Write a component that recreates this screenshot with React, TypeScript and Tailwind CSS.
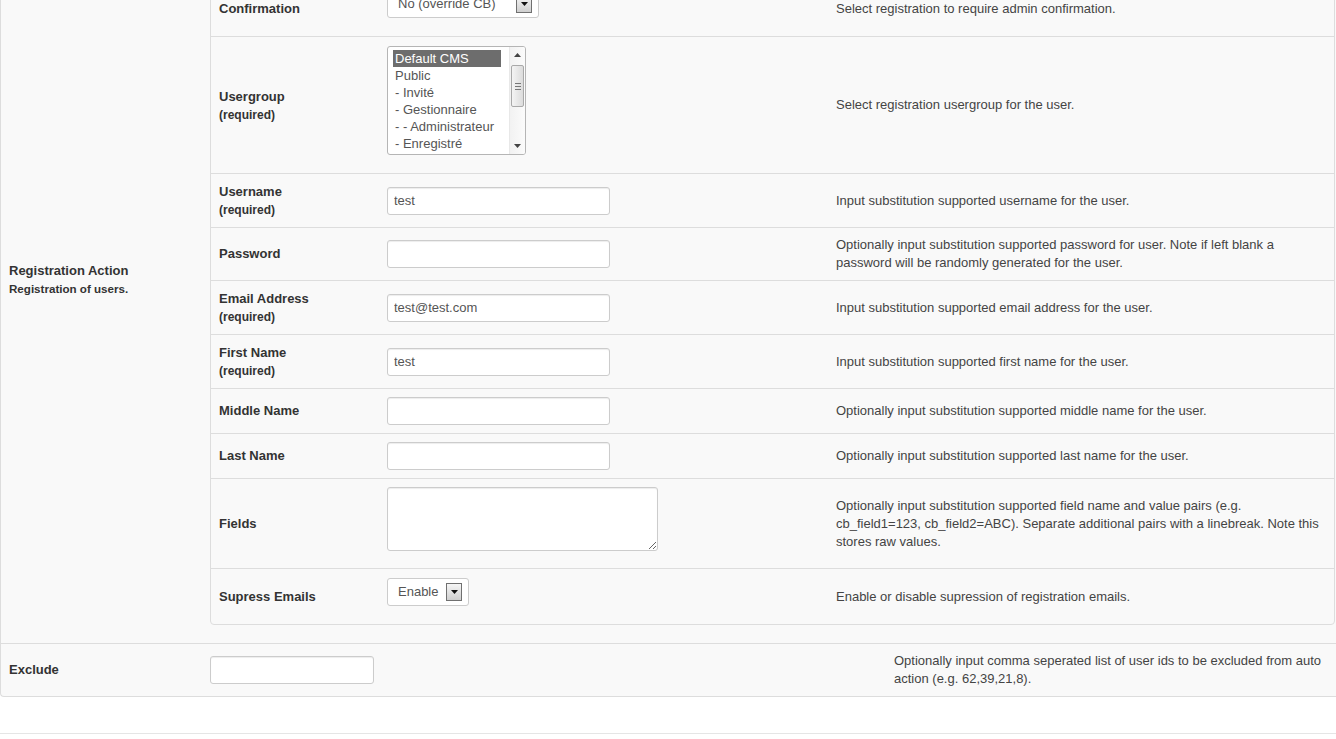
import type { ReactNode } from 'react';

const groups = ['Default CMS', 'Public', '- Invité', '- Gestionnaire', '- - Administrateur', '- Enregistré'];

function FieldLabel({ title, required }: { title: string; required?: boolean }) {
  return (
    <div className="font-bold text-[#333]">
      <div className={`text-[13px] ${required ? 'leading-[19px]' : 'leading-[18px]'}`}>{title}</div>
      {required && <div className="text-[12px] leading-[18px]">(required)</div>}
    </div>
  );
}

function TextInput({ value = '', className = 'w-[223px]' }: { value?: string; className?: string }) {
  return (
    <input
      type="text"
      defaultValue={value}
      className={`${className} block h-[28px] rounded-[3px] border border-[#ccc] bg-white px-[6px] text-[13px] text-[#555] shadow-[inset_0_1px_1px_rgba(0,0,0,0.075)] outline-none`}
    />
  );
}

function ArrowBox() {
  return (
    <div className="flex h-[18px] w-[16px] items-center justify-center border border-[#707070] bg-gradient-to-b from-[#f6f6f6] to-[#cfcfcf]">
      <svg width="7" height="4" viewBox="0 0 7 4">
        <path d="M0 0h7L3.5 4z" fill="#111" />
      </svg>
    </div>
  );
}

// windows style dropdown, drawn by hand so it looks like the screenshot
function DropSelect({ value, className }: { value: string; className: string }) {
  return (
    <div className={`${className} mb-[9px] flex h-[28px] items-center justify-between rounded-[3px] border border-[#ccc] bg-white pl-[10px] pr-[6px] text-[13px] text-[#555]`}>
      <span>{value}</span>
      <ArrowBox />
    </div>
  );
}

function ScrollArrow({ up }: { up?: boolean }) {
  return (
    <div className="flex h-[16px] items-center justify-center">
      <svg width="7" height="4" viewBox="0 0 7 4">
        <path d={up ? 'M0 4h7L3.5 0z' : 'M0 0h7L3.5 4z'} fill="#444" />
      </svg>
    </div>
  );
}

function GroupList() {
  return (
    <div className="mb-[9px] flex h-[109px] w-[139px] overflow-hidden rounded-[3px] border border-[#b5b5b5] bg-white">
      <div className="w-[113px] pl-[5px] pt-[3px]">
        {groups.map((g, i) => (
          <div
            key={g}
            className={`h-[17px] whitespace-nowrap px-[2px] text-[13px] leading-[17px] ${i === 0 ? 'bg-[#6d6d6d] text-white' : 'text-[#555]'}`}
          >
            {g}
          </div>
        ))}
      </div>
      <div className="ml-auto flex w-[16px] flex-col border-l border-[#e8e8e8] bg-gradient-to-r from-[#f2f2f2] to-[#fbfbfb]">
        <ScrollArrow up />
        <div className="flex-1">
          <div className="mx-[1px] mt-[2px] flex h-[42px] flex-col items-center justify-center gap-[2px] rounded-[2px] border border-[#a9a9a9] bg-gradient-to-r from-[#f4f4f4] to-[#dcdcdc]">
            <div className="h-px w-[6px] bg-[#777]" />
            <div className="h-px w-[6px] bg-[#777]" />
            <div className="h-px w-[6px] bg-[#777]" />
          </div>
        </div>
        <ScrollArrow />
      </div>
    </div>
  );
}

function Row({ label, required, desc, className = 'py-2', last, children }: {
  label: string;
  required?: boolean;
  desc: string;
  className?: string;
  last?: boolean;
  children: ReactNode;
}) {
  return (
    <div className={`flex items-center ${className} ${last ? '' : 'border-b border-[#ddd]'}`}>
      <div className="w-[176px] shrink-0 pl-2">
        <FieldLabel title={label} required={required} />
      </div>
      <div className="w-[449px] shrink-0">{children}</div>
      <div className="flex-1 pr-[11px] text-[13px] leading-[18px] text-[#444]">{desc}</div>
    </div>
  );
}

export default function App() {
  return (
    <div className="min-h-screen overflow-hidden bg-white font-['Liberation_Sans',Arial,sans-serif]">
      {/* page is scrolled down, top of the table is above the window */}
      <div className="-mt-[84px]">
        <div className="rounded-bl-[4px] border-b border-l border-[#ddd] bg-[#f9f9f9]">
          <div className="flex items-center border-b border-[#ddd]">
            <div className="w-[209px] shrink-0 pl-2 font-bold text-[#333]">
              <div className="text-[13px] leading-[19px]">Registration Action</div>
              <div className="text-[11.6px] leading-[18px]">Registration of users.</div>
            </div>
            <div className="flex-1 pb-[18px] pr-px pt-2">
              <div className="rounded-b-[4px] border border-[#ddd]">
                <Row label="Approval" desc="Select registration to require admin approval." className="py-[9px]">
                  <DropSelect value="No (override CB)" className="w-[152px]" />
                </Row>
                <Row label="Confirmation" desc="Select registration to require admin confirmation." className="py-[9px]">
                  <DropSelect value="No (override CB)" className="w-[152px]" />
                </Row>
                <Row label="Usergroup" required desc="Select registration usergroup for the user." className="py-[9px]">
                  <GroupList />
                </Row>
                <Row label="Username" required desc="Input substitution supported username for the user.">
                  <TextInput value="test" />
                </Row>
                <Row
                  label="Password"
                  desc="Optionally input substitution supported password for user. Note if left blank a password will be randomly generated for the user."
                >
                  <TextInput />
                </Row>
                <Row label="Email Address" required desc="Input substitution supported email address for the user.">
                  <TextInput value="test@test.com" />
                </Row>
                <Row label="First Name" required desc="Input substitution supported first name for the user.">
                  <TextInput value="test" />
                </Row>
                <Row label="Middle Name" desc="Optionally input substitution supported middle name for the user.">
                  <TextInput />
                </Row>
                <Row label="Last Name" desc="Optionally input substitution supported last name for the user.">
                  <TextInput />
                </Row>
                <Row
                  label="Fields"
                  desc="Optionally input substitution supported field name and value pairs (e.g. cb_field1=123, cb_field2=ABC). Separate additional pairs with a linebreak. Note this stores raw values."
                >
                  <textarea className="mb-[9px] block h-[64px] w-[271px] resize-y rounded-[3px] border border-[#ccc] bg-white px-[6px] py-1 text-[13px] text-[#555] shadow-[inset_0_1px_1px_rgba(0,0,0,0.075)] outline-none" />
                </Row>
                <Row label="Supress Emails" desc="Enable or disable supression of registration emails." className="py-[9px]" last>
                  <DropSelect value="Enable" className="w-[82px]" />
                </Row>
              </div>
            </div>
          </div>
          <div className="flex items-center py-2">
            <div className="w-[209px] shrink-0 pl-2">
              <FieldLabel title="Exclude" />
            </div>
            <div className="w-[684px] shrink-0">
              <TextInput className="w-[164px]" />
            </div>
            <div className="flex-1 pr-2 text-[13px] leading-[18px] text-[#444]">
              Optionally input comma seperated list of user ids to be excluded from auto action (e.g. 62,39,21,8).
            </div>
          </div>
        </div>
        <div className="mt-[36px] h-px bg-[#e5e5e5]" />
      </div>
    </div>
  );
}
